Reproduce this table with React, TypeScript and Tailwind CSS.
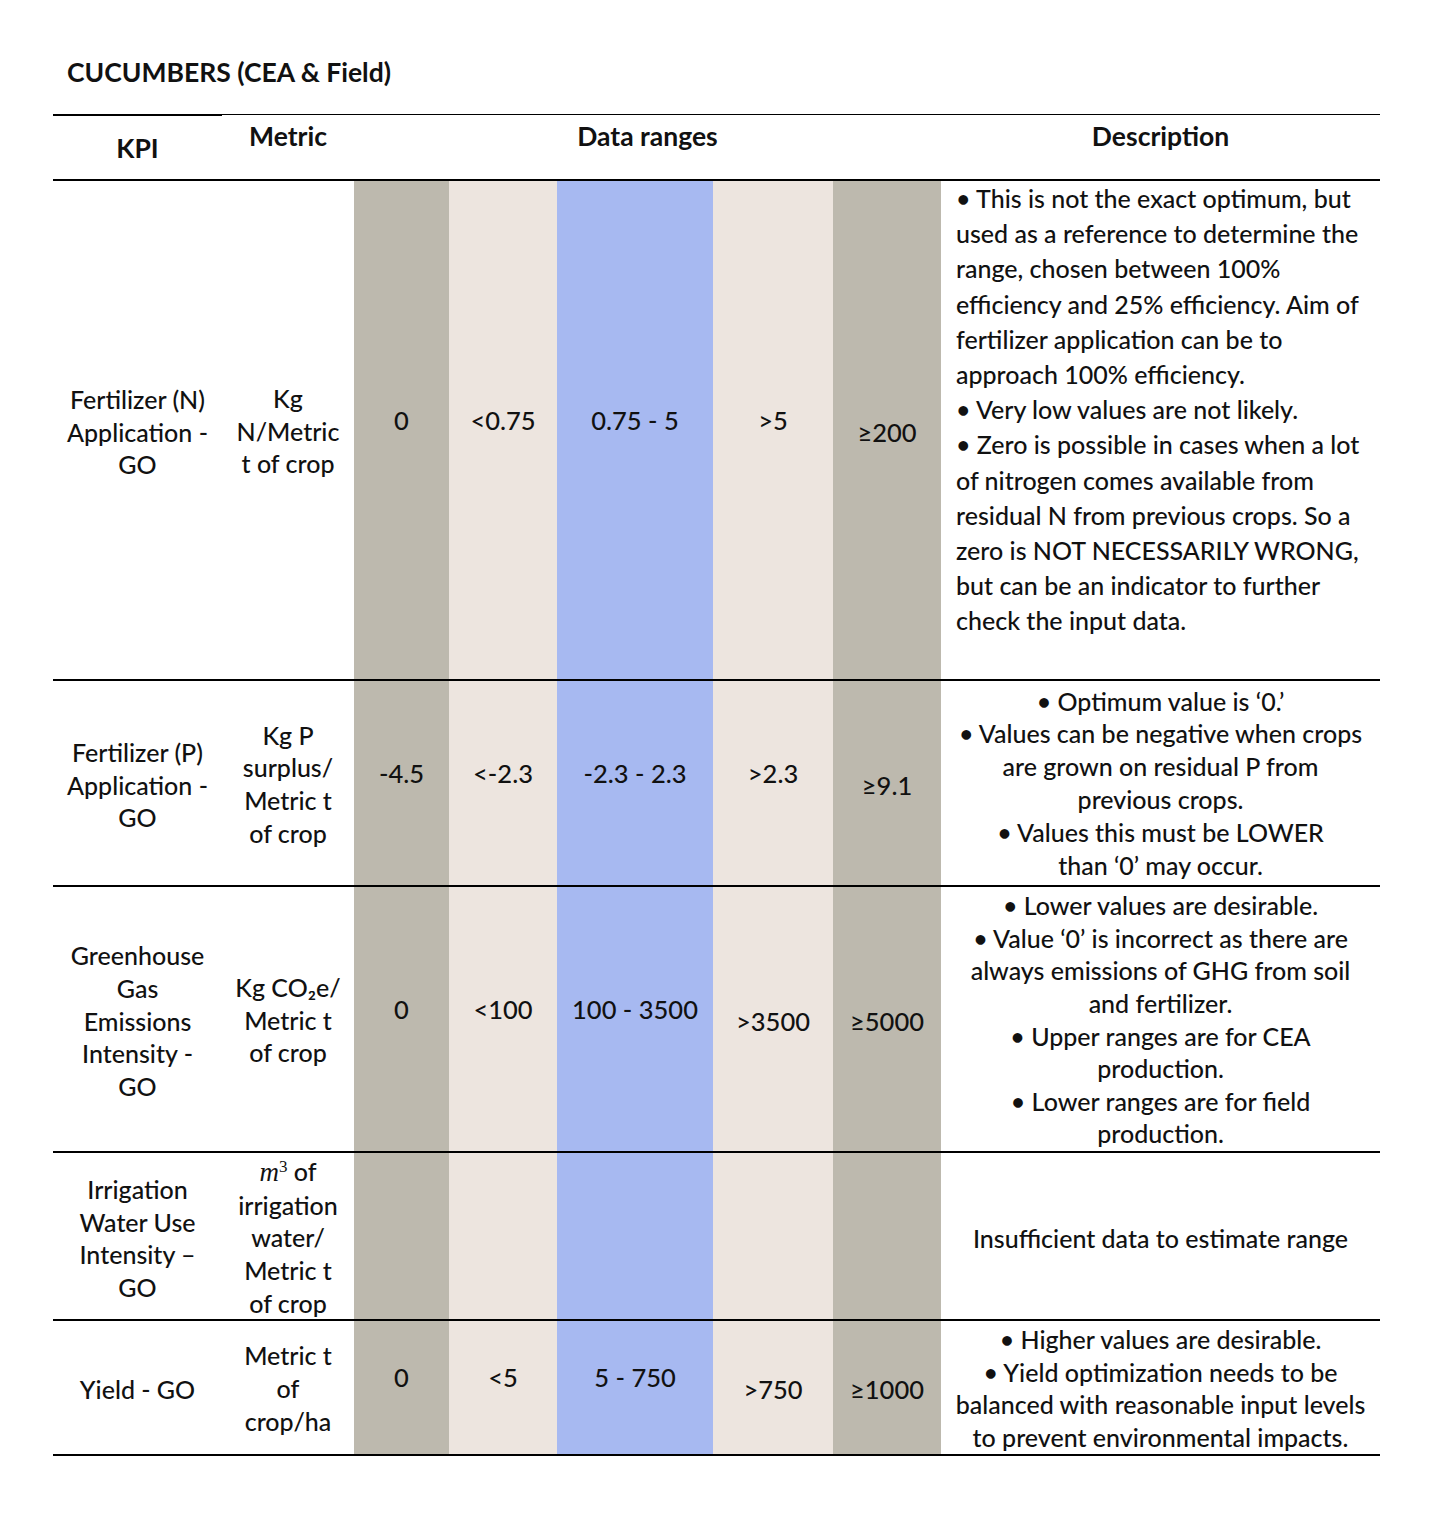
import React from "react";

const COLS = "grid grid-cols-[169px_132px_95px_108px_156px_120px_108px_439px]";
const GRAY = "bg-[#bdb9ae]";
const BEIGE = "bg-[#ede5df]";
const BLUE = "bg-[#a7b9f1]";

type Val = { t: string; pad: string };

type Row = {
  h: string;
  kpi: React.ReactNode;
  metric: React.ReactNode;
  vals: Val[];
  desc: React.ReactNode;
  descCls: string;
};

const UP = "pb-[20px]";
const DN = "pt-[4px]";

const Lines = ({ lines }: { lines: React.ReactNode[] }) => (
  <>
    {lines.map((l, i) => (
      <div key={i} className="whitespace-nowrap">
        {l}
      </div>
    ))}
  </>
);

const rows: Row[] = [
  {
    h: "h-[498px]",
    kpi: <Lines lines={["Fertilizer (N)", "Application -", "GO"]} />,
    metric: <Lines lines={["Kg", "N/Metric", "t of crop"]} />,
    vals: [
      { t: "0", pad: UP },
      { t: "<0.75", pad: UP },
      { t: "0.75 - 5", pad: UP },
      { t: ">5", pad: UP },
      { t: "≥200", pad: DN },
    ],
    descCls: "items-start justify-start text-left pl-[15px] pt-0 leading-[35.2px]",
    desc: (
      <Lines
        lines={[
          "• This is not the exact optimum, but",
          "used as a reference to determine the",
          "range, chosen between 100%",
          "efficiency and 25% efficiency. Aim of",
          "fertilizer application can be to",
          "approach 100% efficiency.",
          "• Very low values are not likely.",
          "• Zero is possible in cases when a lot",
          "of nitrogen comes available from",
          "residual N from previous crops. So a",
          "zero is NOT NECESSARILY WRONG,",
          "but can be an indicator to further",
          "check the input data.",
        ]}
      />
    ),
  },
  {
    h: "h-[204px]",
    kpi: <Lines lines={["Fertilizer (P)", "Application -", "GO"]} />,
    metric: <Lines lines={["Kg P", "surplus/", "Metric t", "of crop"]} />,
    vals: [
      { t: "-4.5", pad: UP },
      { t: "<-2.3", pad: UP },
      { t: "-2.3 - 2.3", pad: UP },
      { t: ">2.3", pad: UP },
      { t: "≥9.1", pad: DN },
    ],
    descCls: "items-center justify-center text-center leading-[32.8px]",
    desc: (
      <Lines
        lines={[
          "• Optimum value is ‘0.’",
          "• Values can be negative when crops",
          "are grown on residual P from",
          "previous crops.",
          "• Values this must be LOWER",
          "than ‘0’ may occur.",
        ]}
      />
    ),
  },
  {
    h: "h-[264px]",
    kpi: <Lines lines={["Greenhouse", "Gas", "Emissions", "Intensity -", "GO"]} />,
    metric: <Lines lines={["Kg CO₂e/", "Metric t", "of crop"]} />,
    vals: [
      { t: "0", pad: UP },
      { t: "<100", pad: UP },
      { t: "100 - 3500", pad: UP },
      { t: ">3500", pad: DN },
      { t: "≥5000", pad: DN },
    ],
    descCls: "items-center justify-center text-center leading-[32.6px] pt-[1px]",
    desc: (
      <Lines
        lines={[
          "• Lower values are desirable.",
          "• Value ‘0’ is incorrect as there are",
          "always emissions of GHG from soil",
          "and fertilizer.",
          "• Upper ranges are for CEA",
          "production.",
          "• Lower ranges are for field",
          "production.",
        ]}
      />
    ),
  },
  {
    h: "h-[166px]",
    kpi: <Lines lines={["Irrigation", "Water Use", "Intensity –", "GO"]} />,
    metric: (
      <Lines
        lines={[
          <span>
            <span className="font-['Liberation_Serif',serif] italic text-[27px]">m</span>
            <sup className="font-['Liberation_Serif',serif] text-[17px] -top-[9px]">3</sup> of
          </span>,
          "irrigation",
          "water/",
          "Metric t",
          "of crop",
        ]}
      />
    ),
    vals: [
      { t: "", pad: "" },
      { t: "", pad: "" },
      { t: "", pad: "" },
      { t: "", pad: "" },
      { t: "", pad: "" },
    ],
    descCls: "items-center justify-center text-center pt-[4px]",
    desc: <Lines lines={["Insufficient data to estimate range"]} />,
  },
  {
    h: "h-[133px]",
    kpi: <Lines lines={["Yield - GO"]} />,
    metric: <Lines lines={["Metric t", "of", "crop/ha"]} />,
    vals: [
      { t: "0", pad: UP },
      { t: "<5", pad: UP },
      { t: "5 - 750", pad: UP },
      { t: ">750", pad: DN },
      { t: "≥1000", pad: DN },
    ],
    descCls: "items-center justify-center text-center leading-[32.5px] pt-[1px]",
    desc: (
      <Lines
        lines={[
          "• Higher values are desirable.",
          "• Yield optimization needs to be",
          "balanced with reasonable input levels",
          "to prevent environmental impacts.",
        ]}
      />
    ),
  },
];

const BGS = [GRAY, BEIGE, BLUE, BEIGE, GRAY];

export default function App() {
  return (
    <div className="min-h-[1514px] w-[1456px] bg-white text-[#111] font-['Lato','Open_Sans',sans-serif] font-medium text-[25px]">
      <div className="pl-[53px] pt-[55px]">
        <div className="pl-[14px] font-bold text-[26.5px] leading-[34px] h-[59px]">
          CUCUMBERS (CEA &amp; Field)
        </div>
        <div className={`${COLS} w-[1327px] border-t border-black border-b-2 h-[67px] font-bold text-[26.5px] leading-[33px]`}>
          <div className="border-t border-black flex justify-center pt-[16px]">KPI</div>
          <div className="flex justify-center pt-[5px]">Metric</div>
          <div className="col-span-5 flex justify-center pt-[5px]">Data ranges</div>
          <div className="flex justify-center pt-[5px]">Description</div>
        </div>
        {rows.map((r, ri) => (
          <div key={ri} className="w-[1327px] border-b-2 border-black">
            <div className={`${COLS} ${r.h} overflow-hidden`}>
              <div className="flex flex-col items-center justify-center text-center leading-[32.7px] pt-[4px]">
                {r.kpi}
              </div>
              <div className="flex flex-col items-center justify-center text-center leading-[32.7px] pt-[2px]">
                {r.metric}
              </div>
              {r.vals.map((v, vi) => (
                <div
                  key={vi}
                  className={`${BGS[vi]} flex items-center justify-center text-[25.5px] leading-[33px] whitespace-nowrap ${v.pad}`}
                >
                  {v.t}
                </div>
              ))}
              <div className={`flex flex-col ${r.descCls}`}>{r.desc}</div>
            </div>
          </div>
        ))}
      </div>
    </div>
  );
}
